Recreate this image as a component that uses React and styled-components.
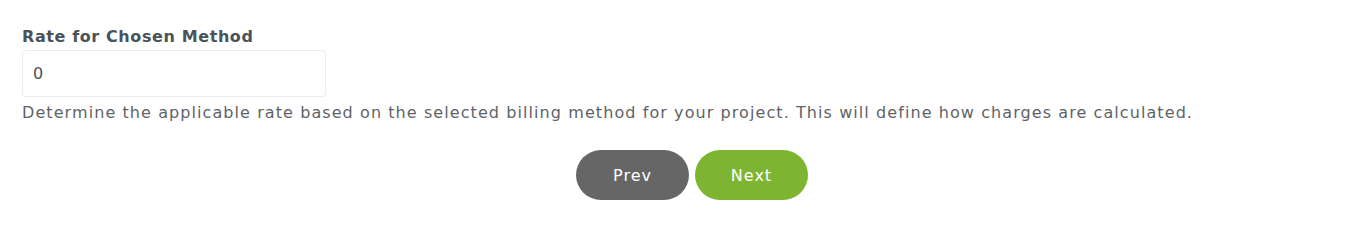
import React from 'react'
import styled, { createGlobalStyle } from 'styled-components'

const GlobalStyle = createGlobalStyle`
  body {
    margin: 0;
    background: #fff;
    font-family: "DejaVu Sans", "Liberation Sans", sans-serif;
  }
`;

const SWrapper = styled.div`
  padding: 26px 0 0 22px;
`;

const SField = styled.div`
  display: flex;
  flex-direction: column;
  align-items: flex-start;
`;

const SLabel = styled.label`
  font-size: 16px;
  font-weight: 700;
  letter-spacing: 0.6px;
  color: #4b5258;
  line-height: 22px;
  margin-bottom: 2px;
`;

const SInput = styled.input`
  box-sizing: border-box;
  width: 304px;
  height: 47px;
  padding: 0 10px;
  border: 1px solid #ebebeb;
  border-radius: 4px;
  font-family: inherit;
  font-size: 16px;
  color: #4b5258;
  outline: none;
`;

const SHelp = styled.p`
  margin: 4px 0 0;
  font-size: 16px;
  letter-spacing: 1.08px;
  line-height: 24px;
  color: #5f6368;
`;

const SActions = styled.div`
  display: flex;
  justify-content: center;
  gap: 6px;
  margin-top: 25px;
`;

const SButton = styled.button`
  width: 113px;
  height: 50px;
  border: none;
  border-radius: 25px;
  font-family: inherit;
  font-size: 16px;
  letter-spacing: 1px;
  color: #fff;
  background: ${p => (p.$primary ? '#7db532' : '#666666')};
  cursor: pointer;
`;

function App() {
  return (
    <>
      <GlobalStyle />
      <SWrapper>
        <SField>
          <SLabel>Rate for Chosen Method</SLabel>
          <SInput defaultValue="0" />
          <SHelp>
            Determine the applicable rate based on the selected billing method for your project. This will define how charges are calculated.
          </SHelp>
        </SField>
        <SActions>
          <SButton>Prev</SButton>
          <SButton $primary>Next</SButton>
        </SActions>
      </SWrapper>
    </>
  )
}

export default App
